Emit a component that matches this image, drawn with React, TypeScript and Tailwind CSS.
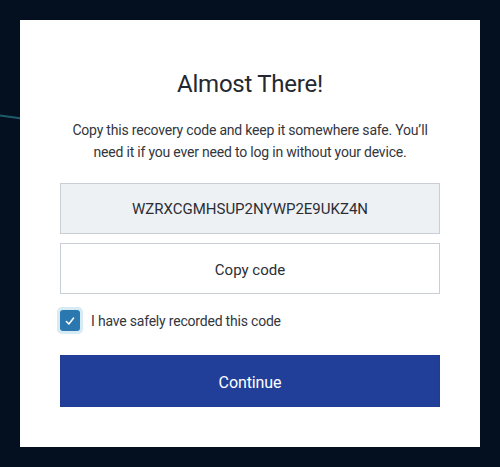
import React from "react";

export default function App() {
  return (
    <div
      className="relative w-[500px] h-[467px] bg-[#04101f] p-5 overflow-hidden"
      style={{ fontFamily: "Roboto, 'Noto Sans', sans-serif" }}
    >
      <svg className="absolute left-0 top-0" width="500" height="467">
        <line x1="0" y1="115.5" x2="40" y2="121" stroke="#1d5c6a" strokeWidth="2" />
      </svg>
      <div className="relative flex flex-col h-full bg-white px-10 pt-12 pb-10">
        <h1 className="text-center text-[24px] leading-8 text-[#25282f] tracking-[-0.25px]">
          Almost There!
        </h1>
        <p className="mt-[19px] text-center text-[14px] leading-[22px] text-[#33363d] tracking-[-0.2px]">
          Copy this recovery code and keep it somewhere safe. You’ll need it if you ever need to log in without your device.
        </p>
        <div className="mt-5 h-[51px] flex items-center justify-center bg-[#eef1f4] border border-[#c9cdd6] text-[15px] text-[#2b2e36] pt-[1px]">
          WZRXCGMHSUP2NYWP2E9UKZ4N
        </div>
        <button className="mt-[9px] h-[51px] flex items-center justify-center bg-white border border-[#c9cdd6] text-[15px] text-[#2b2e36] pt-[3px]">
          Copy code
        </button>
        <label className="mt-[13px] flex items-center gap-[8px] -ml-[3px]">
          <span className="w-[26px] h-[27px] rounded-[5px] bg-[#d7ebf4] flex items-center justify-center">
            <span className="w-5 h-[21px] rounded-[3px] bg-[#2b78b0] flex items-center justify-center">
              <svg width="12" height="12" viewBox="0 0 12 12" fill="none">
                <path d="M2.4 6.5 L4.9 9 L9.6 3" stroke="white" strokeWidth="1.5" strokeLinecap="round" strokeLinejoin="round" />
              </svg>
            </span>
          </span>
          <span className="text-[14px] text-[#33363d] tracking-[-0.2px] pt-[2px]">I have safely recorded this code</span>
        </label>
        <button className="mt-[21px] h-[52px] flex items-center justify-center bg-[#213f99] border border-[#1f3b94] text-[16px] text-white pt-[3px] tracking-[-0.1px]">
          Continue
        </button>
      </div>
    </div>
  );
}
